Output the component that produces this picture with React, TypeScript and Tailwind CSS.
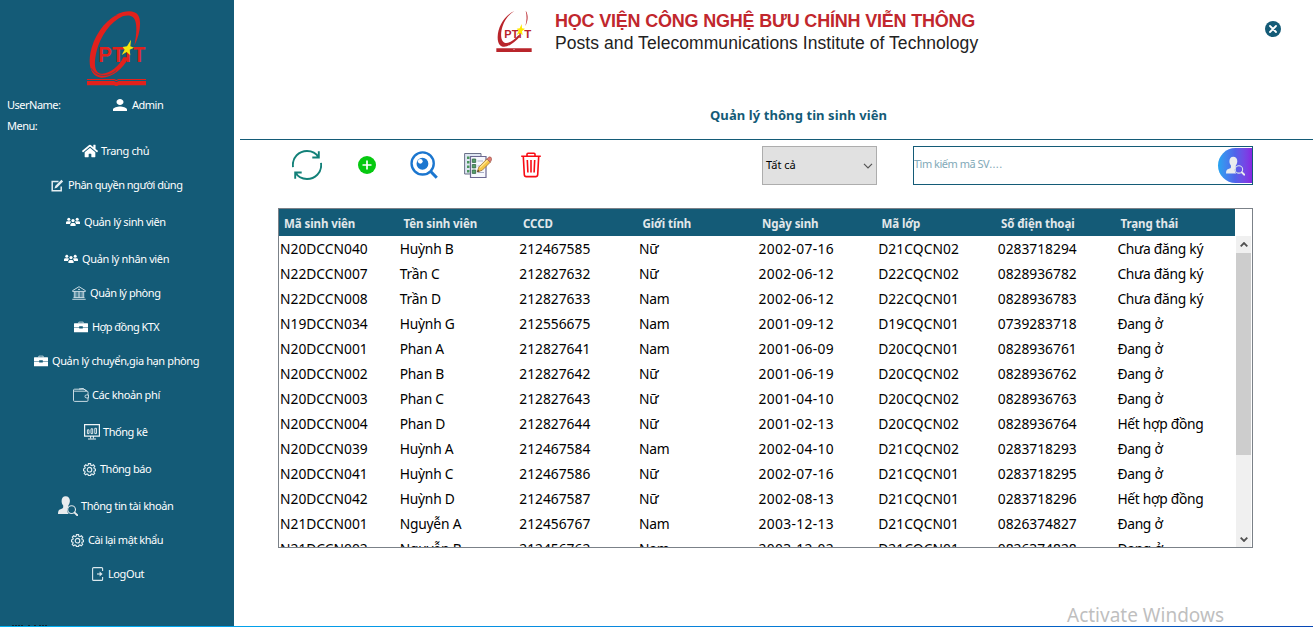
import type { ReactNode } from 'react'
import { FaHome } from 'react-icons/fa'
import { MdPerson } from 'react-icons/md'

function SidebarLogo() {
  return (
    <svg className="ml-[87px] mt-[11px] h-[75px] w-[59px] shrink-0" viewBox="261 33 177 225">
      <path
        fill="#e2211c"
        d="M403 137C420 105 426 62 414 45C403 29 375 31 351 43C310 66 280 113 271 160C264 203 275 229 303 233C333 235 370 208 386 172L370 172C358 199 328 222 305 221C282 218 281 190 290 153C301 110 331 65 368 49C389 42 403 49 406 64C412 84 408 112 403 137Z"
      />
      <path d="M274 205C290 233 325 232 349 211" fill="none" stroke="#145b77" strokeWidth="2" />
      <path d="M283 112C302 75 330 52 352 44" fill="none" stroke="#145b77" strokeWidth="1.5" />
      <g fill="#e2211c" fontFamily="Liberation Sans, sans-serif" fontWeight="700" fontSize="64">
        <text x="295" y="187" textLength="78" lengthAdjust="spacingAndGlyphs">PT</text>
        <text x="375" y="187">I</text>
        <text x="400" y="187" textLength="36" lengthAdjust="spacingAndGlyphs">T</text>
      </g>
      <path d="M393 119L391 139L402 143L389 149L391 166L380 156L365 165L374 149L368 141L381 139Z" fill="#f4e70c" />
      <path d="M261 237H343L349 240L355 237H438V240H355L349 244L343 240H261ZM261 243H342L349 247L356 243H438V256H356L349 259L342 256H261Z" fill="#e2211c" />
    </svg>
  )
}

function HeaderLogo() {
  return (
    <svg className="h-[43px] w-[36px] shrink-0" viewBox="47 32 108 129">
      <path
        fill="#b9252b"
        d="M102 35C72 49 53 82 52 112C51 142 69 149 90 136C106 126 116 117 121 108L114 108C102 123 83 134 73 130C60 126 60 100 67 80C74 60 86 45 102 35Z"
      />
      <path fill="#b9252b" d="M136 34C145 46 143 66 135 80C140 64 140 48 136 34Z" />
      <g fill="#b9252b" fontFamily="Liberation Sans, sans-serif" fontWeight="700" fontSize="30">
        <text x="72" y="116" textLength="42" lengthAdjust="spacingAndGlyphs">PT</text>
        <text x="115" y="116">I</text>
        <text x="132" y="116" textLength="21" lengthAdjust="spacingAndGlyphs">T</text>
      </g>
      <path d="M124 74L125 87L134 88L125 96L127 108L119 101L109 107L115 94L109 88L118 87Z" fill="#ffe800" />
      <path d="M48 146H154V148H48ZM48 149H98L101 151L104 149H154V158H48Z" fill="#b9252b" />
    </svg>
  )
}

function EditIcon() {
  return (
    <svg viewBox="0 0 13 13" className="h-[13px] w-[13px]" fill="none" stroke="#e4eef2">
      <path d="M7.500 2.500H1.200V11.800H10.200V7.500" strokeWidth="1.500" />
      <path d="M4.800 8.200L11.300 1.700" strokeWidth="2.400" />
      <path d="M3.500 9.500L4.200 7.200L5.800 8.800Z" fill="#e4eef2" stroke="none" />
    </svg>
  )
}

function UsersIcon() {
  return (
    <svg viewBox="0 0 14 10" className="h-[10px] w-[14px]" fill="#fff">
      <circle cx="2.8" cy="2.2" r="1.5" />
      <circle cx="11.2" cy="2.2" r="1.5" />
      <circle cx="7" cy="3.6" r="1.6" />
      <path d="M0 7V5.4Q0 4.2 1.4 4.2H4.2Q4.8 4.2 5 5L4 6.2V7ZM14 7V5.4Q14 4.2 12.6 4.2H9.8Q9.2 4.2 9 5L10 6.2V7ZM4.4 9V7.4Q4.4 5.9 6 5.9H8Q9.6 5.9 9.6 7.4V9Z" />
    </svg>
  )
}

function BankIcon() {
  return (
    <svg viewBox="0 0 14 14" className="h-[14px] w-[14px]" fill="none" stroke="#dce9ee" strokeWidth=".9">
      <path d="M.6 4.6 7 .7l6.400 3.900V5.400H.6ZM1.500 11.600H12.500M.3 13.300H13.700M2.300 5.500V11.500M3.900 5.500V11.500M6.200 5.500V11.500M7.800 5.500V11.500M10.100 5.500V11.500M11.700 5.500V11.500M6 3.400H8" />
    </svg>
  )
}

function BriefcaseIcon() {
  return (
    <svg viewBox="0 0 14 12" className="h-[12px] w-[14px]">
      <path d="M4.800 2.400V1.100H9.200V2.400" fill="none" stroke="#dce9ee" strokeWidth=".8" />
      <path d="M.5 2.200H13.500Q14 2.200 14 2.800V6H8.800V5.300H5.200V6H0V2.800Q0 2.200.5 2.200ZM0 6.600H5.200V7.400H8.800V6.600H14V11.200H0Z" fill="#fff" />
    </svg>
  )
}

function WalletIcon() {
  return (
    <svg viewBox="0 0 16 14" className="h-[14px] w-[16px]" fill="none" stroke="#dce9ee" strokeWidth=".9">
      <path d="M15 7V4.200Q15 3.200 14 3.200H1.500Q.5 3.200.5 2.200V12.300Q.5 13.400 1.600 13.400H14Q15 13.400 15 12.400V10M.5 2.200Q.5 1.200 1.600 1.200H11L14 3M6 1L10 .4L13 2.700M15.500 7H13.200Q12 7 12 8.400T13.200 9.900H15.500Z" />
    </svg>
  )
}

function MonitorIcon() {
  return (
    <svg viewBox="0 0 16 16" className="h-[16px] w-[16px]" fill="none" stroke="#f0f5f7">
      <path d="M.6.6H15.400V12.100H.6Z" strokeWidth="1.200" />
      <path d="M3.400 5.800H5V9.600H3.400ZM7 4.800H8.700V9.600H7ZM10.800 4.300H12.500V9.600H10.800Z" strokeWidth=".9" />
      <path d="M6.600 12V14.500M9.400 12V14.500M4 15H12" strokeWidth="1" />
    </svg>
  )
}

function GearIcon() {
  return (
    <svg viewBox="0 0 24 24" className="h-[13px] w-[13px]" fill="none" stroke="#e4eef2" strokeWidth="2.100">
      <path d="M10 1.200h4l.6 3 2 .8 2.600-1.700 2.500 2.600L20 8.500l.8 2 2.400.5v3.200l-2.500.6-.8 1.900 1.600 2.500-2.600 2.600-2.500-1.600-1.900.8-.5 2.400H10l-.6-2.500-2-.8-2.600 1.700-2.500-2.600L4 16.600l-.8-1.900-2.400-.5V11l2.500-.6.8-1.900-1.600-2.600 2.600-2.600 2.500 1.600 1.900-.8Z" />
      <circle cx="12" cy="12.400" r="4.200" />
    </svg>
  )
}

function PersonSearchIcon() {
  return (
    <svg viewBox="0 0 20 20" className="h-full w-full">
      <path
        d="M7.600.3C10.300.3 12 2.200 11.900 5.100C11.800 7 11.200 8.500 10.300 9.500V11.300C9 12.600 8.700 15.700 10.800 18H0C0 15.200.6 13.800 2.500 13.200C4.500 12.500 5.200 12 5.200 11V9.400C4.100 8.300 3.600 6.600 3.600 5C3.600 2.300 5.100.3 7.600.3Z"
        fill="#e9ecee"
      />
      <circle cx="13.600" cy="13.600" r="3.900" fill="none" stroke="#dfe7ea" strokeWidth="1.100" />
      <path d="M16.600 16.600L19.300 19.200" stroke="#e9ecee" strokeWidth="1.900" strokeLinecap="round" />
    </svg>
  )
}

function LogoutIcon() {
  return (
    <svg viewBox="0 0 12 14" className="h-[14px] w-[12px]" fill="none" stroke="#dce9ee" strokeWidth="1.100">
      <path d="M10.600 4V1.600Q10.600.6 9.600.6H1.600Q.6.6.6 1.600V12.400Q.6 13.400 1.600 13.400H9.600Q10.600 13.400 10.600 12.400V10" />
      <path d="M5 7H9" />
      <path d="M7.600 4.600L10.600 7L7.600 9.400Z" fill="#dce9ee" stroke="none" />
    </svg>
  )
}

interface MenuItem {
  label: string
  icon: ReactNode
  row: string
  text: string
}

const menu: MenuItem[] = [
  { label: 'Trang chủ', icon: <FaHome className="h-4 w-4" />, row: 'pl-[82px] gap-[3px]', text: 'tracking-[-0.35px]' },
  { label: 'Phân quyền người dùng', icon: <EditIcon />, row: 'pl-[51px] gap-[4px]', text: 'tracking-[-0.5px]' },
  { label: 'Quản lý sinh viên', icon: <UsersIcon />, row: 'mt-[3px] pl-[66px] gap-[4px]', text: 'tracking-[-0.4px]' },
  { label: 'Quản lý nhân viên', icon: <UsersIcon />, row: 'mt-[3px] pl-[64px] gap-[4px]', text: 'tracking-[-0.37px]' },
  { label: 'Quản lý phòng', icon: <BankIcon />, row: 'pl-[72px] gap-[4px]', text: 'tracking-[-0.45px]' },
  { label: 'Hợp đồng KTX', icon: <BriefcaseIcon />, row: 'pl-[74px] gap-[4px]', text: 'tracking-[-0.55px]' },
  { label: 'Quản lý chuyển,gia hạn phòng', icon: <BriefcaseIcon />, row: 'pl-[34px] gap-[4px]', text: 'tracking-[-0.39px]' },
  { label: 'Các khoản phí', icon: <WalletIcon />, row: 'pl-[73px] gap-[3px]', text: 'tracking-[-0.38px]' },
  { label: 'Thống kê', icon: <MonitorIcon />, row: 'mt-[3px] pl-[84px] gap-[3px]', text: 'tracking-[-0.45px]' },
  { label: 'Thông báo', icon: <GearIcon />, row: 'mt-[3px] pl-[83px] gap-[4px]', text: 'tracking-[-0.5px]' },
  { label: 'Thông tin tài khoản', icon: <span className="h-5 w-5"><PersonSearchIcon /></span>, row: 'mt-[3px] pl-[58px] gap-[3px]', text: 'tracking-[-0.44px]' },
  { label: 'Cài lại mật khẩu', icon: <GearIcon />, row: 'pl-[71px] gap-[4px]', text: 'tracking-[-0.46px]' },
  { label: 'LogOut', icon: <LogoutIcon />, row: 'pl-[92px] gap-[4px]', text: 'tracking-[-0.4px]' },
]

const columns = ['Mã sinh viên', 'Tên sinh viên', 'CCCD', 'Giới tính', 'Ngày sinh', 'Mã lớp', 'Số điện thoại', 'Trạng thái']

const cellTracking = ['', 'tracking-[-0.2px]', '', 'tracking-[-0.2px]', 'tracking-[0.35px]', 'tracking-[0.1px]', '', 'tracking-[-0.28px]']

const students = [
  ['N20DCCN040', 'Huỳnh B', '212467585', 'Nữ', '2002-07-16', 'D21CQCN02', '0283718294', 'Chưa đăng ký'],
  ['N22DCCN007', 'Trần C', '212827632', 'Nữ', '2002-06-12', 'D22CQCN02', '0828936782', 'Chưa đăng ký'],
  ['N22DCCN008', 'Trần D', '212827633', 'Nam', '2002-06-12', 'D22CQCN01', '0828936783', 'Chưa đăng ký'],
  ['N19DCCN034', 'Huỳnh G', '212556675', 'Nam', '2001-09-12', 'D19CQCN01', '0739283718', 'Đang ở'],
  ['N20DCCN001', 'Phan A', '212827641', 'Nam', '2001-06-09', 'D20CQCN01', '0828936761', 'Đang ở'],
  ['N20DCCN002', 'Phan B', '212827642', 'Nữ', '2001-06-19', 'D20CQCN02', '0828936762', 'Đang ở'],
  ['N20DCCN003', 'Phan C', '212827643', 'Nữ', '2001-04-10', 'D20CQCN02', '0828936763', 'Đang ở'],
  ['N20DCCN004', 'Phan D', '212827644', 'Nữ', '2001-02-13', 'D20CQCN02', '0828936764', 'Hết hợp đồng'],
  ['N20DCCN039', 'Huỳnh A', '212467584', 'Nam', '2002-04-10', 'D21CQCN02', '0283718293', 'Đang ở'],
  ['N20DCCN041', 'Huỳnh C', '212467586', 'Nữ', '2002-07-16', 'D21CQCN01', '0283718295', 'Đang ở'],
  ['N20DCCN042', 'Huỳnh D', '212467587', 'Nữ', '2002-08-13', 'D21CQCN01', '0283718296', 'Hết hợp đồng'],
  ['N21DCCN001', 'Nguyễn A', '212456767', 'Nam', '2003-12-13', 'D21CQCN01', '0826374827', 'Đang ở'],
  ['N21DCCN002', 'Nguyễn B', '212456762', 'Nam', '2003-12-02', 'D21CQCN01', '0826374828', 'Đang ở'],
]

function Sidebar() {
  return (
    <aside className="flex w-[234px] shrink-0 flex-col overflow-hidden bg-[#145b77] text-[11px] leading-4 text-white">
      <SidebarLogo />
      <div className="mt-[11px] flex h-4 items-center pl-[7px] tracking-[-0.5px]">
        <span className="w-[106px]">UserName:</span>
        <svg className="h-[12px] w-[14px]" viewBox="4 4 16 16" preserveAspectRatio="none">
          <MdPerson size={24} color="#fff" />
        </svg>
        <span className="ml-[5px]">Admin</span>
      </div>
      <div className="mt-[5px] pl-[7px] tracking-[-0.5px]">Menu:</div>
      <nav>
        {menu.map((item) => (
          <div key={item.label} className={`flex h-[34px] items-center whitespace-nowrap ${item.row}`}>
            <span className="flex shrink-0">{item.icon}</span>
            <span className={item.text}>{item.label}</span>
          </div>
        ))}
      </nav>
      <svg className="ml-3 mt-auto h-px w-[38px]" viewBox="0 0 38 1">
        <path d="M0 .5H12M16 .5H18M22 .5H25M27 .5H35" stroke="#10222c" strokeWidth="1" strokeDasharray="2 1" />
      </svg>
    </aside>
  )
}

function Toolbar() {
  return (
    <div className="flex h-[68px] items-start">
      <svg className="ml-[52px] mt-[10px] h-[30px] w-[30px]" viewBox="0 0 30 30" fill="none" stroke="#128078" strokeWidth="1.900">
        <path d="M1 17.200C-.4 7 7.600 1 15 1C20 1 24.400 3.600 26.600 7.400M20.300 7.500H26.800V1.200" />
        <path d="M29 12.800C30.400 23 22.400 29 15 29C10 29 5.600 26.400 3.400 22.600M9.700 22.500H3.200V28.800" />
      </svg>
      <svg className="ml-[36px] mt-[16px] h-[18px] w-[18px]" viewBox="0 0 18 18">
        <circle cx="9" cy="9" r="9" fill="#06c910" />
        <path d="M9 4.500V13.500M4.500 9H13.500" stroke="#fff" strokeWidth="1.700" />
      </svg>
      <svg className="ml-[34px] mt-[11px] h-[28px] w-[28px]" viewBox="0 0 27 27" fill="none" stroke="#1b76cf">
        <circle cx="12.200" cy="12" r="10.700" strokeWidth="2.300" />
        <path d="M20 19.800L25.800 25.800" strokeWidth="3" />
        <circle cx="12" cy="12.300" r="5.700" fill="#1b76cf" stroke="none" />
        <circle cx="9.900" cy="9.900" r="2.300" fill="#fff" stroke="none" />
      </svg>
      <svg className="ml-[26px] mt-[12px] h-[27px] w-[28px]" viewBox="0 0 28 27">
        <path d="M.6 1.500H17V22H.6Z" fill="#dfe6f2" stroke="#6b7189" />
        <path d="M3 4.500H5.500V7H3ZM3 9H5.500V11.500H3ZM3 13.500H5.500V16H3ZM3 18H5.500V20.500H3Z" fill="#4a955c" />
        <path d="M6.500 4.500H22V25.500H6.500Z" fill="#f6f8fd" stroke="#6c6992" strokeWidth="1.200" />
        <path d="M8.300 7H11.700V10.400H8.300ZM8.300 12.500H11.700V15.900H8.300ZM8.300 18H11.700V21.400H8.300Z" fill="#57a168" stroke="#316548" strokeWidth=".8" />
        <path d="M13.500 9H19M13.500 14H17M14 20.500H20" stroke="#acb1c9" />
        <path d="M13.200 20L14.800 15.200L22.800 7L26.300 10.200L18.200 18.300Z" fill="#f5c645" stroke="#9c7034" strokeWidth=".8" />
        <path d="M16 15.500L24 7.800" stroke="#ffe693" strokeWidth="1.200" />
        <path d="M22.800 7L25 4.900Q27 4.600 27.600 6.300Q28 8 26.300 10.200Z" fill="#e07c70" stroke="#925451" strokeWidth=".6" />
        <path d="M13.200 20L14 17.700L15.500 19.200Z" fill="#40332c" />
      </svg>
      <svg className="ml-[29px] mt-[12px] h-[26px] w-[20px]" viewBox="-1 0 20 26" fill="none" stroke="#f80c14" strokeWidth="1.600">
        <path d="M-.8 4.200H18.800M5 4V2.300Q5 1.300 6 1.300H12Q13 1.300 13 2.300V4M1.300 4.500L2.300 22.600Q2.500 24.600 4.200 24.600H13.800Q15.500 24.600 15.700 22.600L16.700 4.500" />
        <path d="M5.300 8L5.900 20.500M9 8V20.500M12.700 8L12.100 20.500" />
      </svg>
      <div className="ml-[221px] mt-[6px] flex h-[39px] w-[115px] items-center justify-between border border-[#adadad] bg-[#e1e1e1] pl-[3px] pr-[3px] text-[11px] text-black">
        <span>Tất cả</span>
        <svg className="h-[6px] w-[10px]" viewBox="0 0 10 6" fill="none" stroke="#555" strokeWidth="1.200">
          <path d="M1 .8L5 4.800L9 .8" />
        </svg>
      </div>
      <div className="ml-[36px] mt-[6px] flex h-[39px] w-[340px] items-start justify-between border border-[#145b77] pt-[1px]">
        <span className="mt-[8px] text-[11px] leading-4 text-[#82a9b8]">
          <span className="tracking-[-0.5px]">Tìm kiếm mã SV</span>
          <span className="tracking-[0.4px]">....</span>
        </span>
        <div className="flex h-[35px] w-[34px] items-center justify-center rounded-l-[18px] bg-linear-to-r from-[#25a4f0] via-[#4f63ea] to-[#8726e2]">
          <span className="h-5 w-[19px]"><PersonSearchIcon /></span>
        </div>
      </div>
    </div>
  )
}

function StudentTable() {
  return (
    <div className="ml-[38px] flex h-[340px] w-[975px] overflow-hidden border border-[#7b8188]">
      <div className="w-[957px] shrink-0">
        <div className="grid h-[27px] w-[956px] grid-cols-8 items-center bg-[#145b77] pt-[3px] text-[11.5px] font-bold tracking-[-0.08px] text-[#e2e8eb]">
          {columns.map((column) => (
            <span key={column} className="whitespace-nowrap pl-[5px]">{column}</span>
          ))}
        </div>
        {students.map((student) => (
          <div key={student[0]} className="grid h-[25px] w-[957px] grid-cols-8 items-center text-[13.8px] leading-[25px] text-black">
            {student.map((value, index) => (
              <span key={columns[index]} className={`whitespace-nowrap pl-[1px] ${cellTracking[index]}`}>{value}</span>
            ))}
          </div>
        ))}
      </div>
      <div className="mt-[27px] flex w-[15px] flex-col items-center bg-[#f0f0f0]">
        <svg className="mt-[6px] h-[5px] w-[8px]" viewBox="0 0 8 5" fill="none" stroke="#505050" strokeWidth="1.800">
          <path d="M.7 4.300L4 1L7.300 4.300" />
        </svg>
        <div className="mt-[6px] h-[202px] w-full bg-[#cdcdcd]" />
        <svg className="mb-[5px] mt-auto h-[5px] w-[8px]" viewBox="0 0 8 5" fill="none" stroke="#505050" strokeWidth="1.800">
          <path d="M.7 .7L4 4L7.300 .7" />
        </svg>
      </div>
    </div>
  )
}

export default function App() {
  return (
    <div className="flex h-[627px] w-[1313px] flex-col overflow-hidden bg-white font-['Noto_Sans',sans-serif]">
      <div className="flex h-[626px]">
        <Sidebar />
        <main className="flex flex-1 flex-col pl-[6px]">
          <header className="flex h-[104px] items-start pl-[256px] pt-[10px]">
            <HeaderLogo />
            <div className="ml-[23px] whitespace-nowrap font-['Liberation_Sans',sans-serif]">
              <div className="text-[18px] font-bold leading-[23px] tracking-[-0.2px] text-[#c1272d]">HỌC VIỆN CÔNG NGHỆ BƯU CHÍNH VIỄN THÔNG</div>
              <div className="text-[17.5px] leading-[20px] tracking-[0.07px] text-[#222]">Posts and Telecommunications Institute of Technology</div>
            </div>
            <svg className="ml-auto mr-[32px] mt-[11px] h-4 w-4" viewBox="0 0 16 16">
              <circle cx="8" cy="8" r="8" fill="#145b77" />
              <path d="M5 5L11 11M11 5L5 11" stroke="#fff" strokeWidth="1.800" strokeLinecap="round" />
            </svg>
          </header>
          <h1 className="h-[35px] pl-[470px] text-[13px] font-bold leading-[22px] tracking-[0.08px] text-[#145b77]">Quản lý thông tin sinh viên</h1>
          <div className="h-px bg-[#145b77]" />
          <div className="flex flex-1 flex-col">
            <Toolbar />
            <StudentTable />
            <div className="mt-auto h-[25px] pl-[827px] text-[19px] leading-[28px] text-[#bfbfbf]">Activate Windows</div>
          </div>
        </main>
      </div>
      <div className="h-px bg-linear-to-r from-[#00b2f4] via-[#0a86dc] to-[#0747b5]" />
    </div>
  )
}
